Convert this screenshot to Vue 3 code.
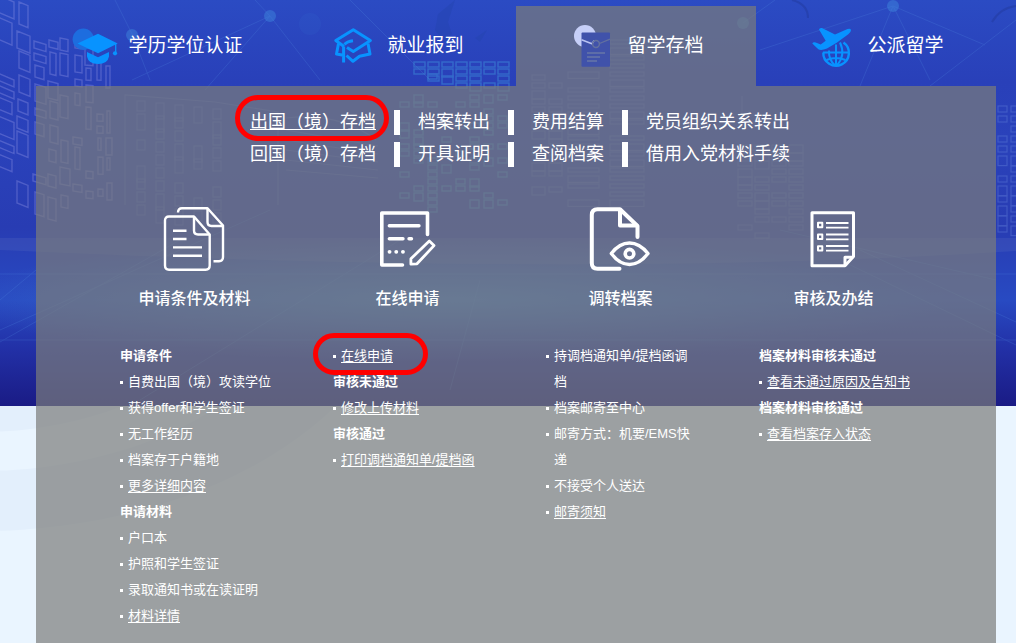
<script setup>
const tabs = [
  { label: '学历学位认证', icon: 'cap' },
  { label: '就业报到', icon: 'grad' },
  { label: '留学存档', icon: 'card', active: true },
  { label: '公派留学', icon: 'plane' },
]

const quickLinks = [
  [{ text: '出国（境）存档', current: true }, { text: '档案转出' }, { text: '费用结算' }, { text: '党员组织关系转出' }],
  [{ text: '回国（境）存档' }, { text: '开具证明' }, { text: '查阅档案' }, { text: '借用入党材料手续' }],
]

const columns = [
  {
    title: '申请条件及材料',
    icon: 'docs',
    groups: [
      {
        heading: '申请条件',
        items: [
          { text: '自费出国（境）攻读学位' },
          { text: '获得offer和学生签证' },
          { text: '无工作经历' },
          { text: '档案存于户籍地' },
          { text: '更多详细内容', link: true },
        ],
      },
      {
        heading: '申请材料',
        items: [
          { text: '户口本' },
          { text: '护照和学生签证' },
          { text: '录取通知书或在读证明' },
          { text: '材料详情', link: true },
        ],
      },
    ],
  },
  {
    title: '在线申请',
    icon: 'edit',
    groups: [
      { items: [{ text: '在线申请', link: true, marked: true }] },
      { heading: '审核未通过', items: [{ text: '修改上传材料', link: true }] },
      { heading: '审核通过', items: [{ text: '打印调档通知单/提档函', link: true }] },
    ],
  },
  {
    title: '调转档案',
    icon: 'eye',
    groups: [
      {
        items: [
          { text: '持调档通知单/提档函调档' },
          { text: '档案邮寄至中心' },
          { text: '邮寄方式：机要/EMS快递' },
          { text: '不接受个人送达' },
          { text: '邮寄须知', link: true },
        ],
      },
    ],
  },
  {
    title: '审核及办结',
    icon: 'list',
    groups: [
      { heading: '档案材料审核未通过', items: [{ text: '查看未通过原因及告知书', link: true }] },
      { heading: '档案材料审核通过', items: [{ text: '查看档案存入状态', link: true }] },
    ],
  },
]

/* Deterministic scatter of window outlines for the skyline artwork */
function windows(x, y, cols, rows, w, h, dx, dy, keep, seed, slope = 0) {
  const out = []
  let s = seed
  for (let c = 0; c < cols; c++) {
    for (let r = 0; r < rows; r++) {
      s = (s * 1103515245 + 12345) % 2147483648
      const v = s / 2147483648
      if (v > keep) continue
      out.push({ x: x + c * dx, y: y + r * dy + c * slope, w, h: h * (v < keep / 3 ? 1.6 : 1) })
    }
  }
  return out
}

/* Facade seen in perspective: panes shrink and sink towards the right edge */
const facadeColumns = [
  [-6, 20, -6, 0.42],
  [17, 13, 2, 0.4],
  [33, 13, 12, 0.3],
  [48, 10, 26, 0.25],
  [60, 10, 38, 0.2],
  [73, 9, 36, 0.15],
  [85, 8, 48, 0.1],
  [96, 7, 58, 0.05],
  [106, 6, 66, 0],
]
const facade = facadeColumns
  .map(([x, w, top, tilt], c) => {
    let d = ''
    let y = top
    let k = c * 3 + 1
    while (y < 212 - c * 3) {
      k = (k * 17 + 5) % 31
      const h = 7 + (k % 4) * 5
      const inset = k % 3
      if (k % 5 !== 0) {
        const l = x + inset
        const r = x + w - (k % 2) * 2
        d += `M${l} ${y} L${r} ${y + (r - l) * tilt} V${y + h + (r - l) * tilt} L${l} ${y + h}Z `
      }
      y += h + 3 + (k % 3) * 2 + (y > 140 ? 8 : 0)
    }
    return d
  })
  .join('')

const towers = [
  ...windows(137, 101, 5, 9, 8, 10, 19, 13, 0.8, 5, 2),
  ...windows(532, 75, 2, 15, 13, 5, 17, 8, 0.7, 9),
  ...windows(568, 72, 1, 17, 31, 4, 0, 8, 0.85, 14),
  ...windows(610, 40, 1, 21, 34, 4, 0, 8, 0.85, 3),
  ...windows(738, 145, 4, 12, 14, 5, 17, 8, 0.7, 8),
]
const centerWindows = [
  ...windows(414, 62, 3, 3, 11, 5, 14, 7, 0.85, 42),
  ...windows(456, 62, 4, 4, 11, 5, 14, 7, 0.9, 77),
  ...windows(400, 74, 8, 20, 9, 5, 14, 7, 0.35, 13),
]
const rightWindows = windows(998, 106, 2, 13, 9, 6, 13, 10, 0.85, 19)
</script>

<template>
  <div class="page">
    <svg class="waves" viewBox="0 0 1016 237" preserveAspectRatio="none" aria-hidden="true">
      <rect width="1016" height="237" fill="#eaf5ff" />
      <ellipse cx="-20" cy="-160" rx="430" ry="285" fill="#e3effc" />
      <ellipse cx="-20" cy="-160" rx="340" ry="225" fill="#eaf5ff" />
      <ellipse cx="-20" cy="-160" rx="280" ry="186" fill="#e3effc" />
    </svg>
    <svg class="hero" viewBox="0 0 1016 406" preserveAspectRatio="none" aria-hidden="true">
      <defs>
        <linearGradient id="sky" x1="0" y1="0" x2="0" y2="1">
          <stop offset="0" stop-color="#2b4bc3" />
          <stop offset="0.2" stop-color="#2940b9" />
          <stop offset="0.35" stop-color="#2a42bb" />
          <stop offset="0.56" stop-color="#283cb3" />
          <stop offset="0.74" stop-color="#284ac2" />
          <stop offset="0.86" stop-color="#2230a6" />
          <stop offset="1" stop-color="#1a1b85" />
        </linearGradient>
        <radialGradient id="glow">
          <stop offset="0" stop-color="#57a8d8" stop-opacity="0.45" />
          <stop offset="1" stop-color="#57a8d8" stop-opacity="0" />
        </radialGradient>
      </defs>
      <rect width="1016" height="406" fill="url(#sky)" />
      <ellipse cx="450" cy="300" rx="500" ry="62" fill="url(#glow)" />
      <path d="M0 238 H1016 V251 Q600 278 0 250Z" fill="#7890c8" opacity="0.15" />
      <g stroke="#5793e6" stroke-width="1" opacity="0.2" fill="none">
        <path d="M270 16 L132 80 M270 16 L205 90 M270 16 L320 80 M270 16 L255 0 M132 34 L115 0 M132 34 L150 80 M350 0 L430 80" />
        <path d="M893 6 L760 50 M893 6 L930 80 M893 6 L985 45 M893 6 L860 86 M743 23 L775 0 M1016 20 L930 86" />
        <path d="M0 300 L36 270 M0 342 L180 240 M0 330 L270 210 M140 400 L400 240 M450 390 L480 280 M996 280 L780 230 M1016 345 L840 260 M1016 322 L860 250" />
        <path d="M0 274 H1016 M0 340 H1016" />
      </g>
      <g fill="#3d83dc" opacity="0.5">
        <circle cx="270" cy="16" r="6" /><circle cx="132" cy="35" r="6" />
        <circle cx="893" cy="6" r="6" /><circle cx="743" cy="23" r="6" />
        <circle cx="310" cy="24" r="11" opacity="0.2" />
      </g>
      <path d="M455 0 L448 22 L452 34 L444 42 L435 30 L438 14Z M475 38 L487 30 L480 42Z" fill="#2444ad" opacity="0.4" />
      <path d="M792 0 Q808 4 808 18 M992 22 Q1000 8 1016 6" stroke="#223a9d" stroke-width="2" fill="none" opacity="0.5" />
      <path :d="facade" fill="none" stroke="#a6a6ee" stroke-width="1.4" opacity="0.3" />
      <g fill="none" stroke="#7f9ae0" stroke-width="1.2" opacity="0.22">
        <rect v-for="(r, i) in towers" :key="i" :x="r.x" :y="r.y" :width="r.w" :height="r.h" />
        <path d="M125 205 V95 L215 102 L278 112 V205 M742 96 V130 M730 150 H755 M286 118 Q340 112 376 140" />
        <path d="M286 130 L378 146 M286 140 L378 154 M286 150 L378 162 M286 160 L378 170 M286 170 L378 178" />
      </g>
      <g fill="none" stroke="#3f93dc" stroke-width="1.4" opacity="0.5">
        <rect v-for="(r, i) in centerWindows" :key="i" :x="r.x" :y="r.y" :width="r.w" :height="r.h" />
      </g>
      <g fill="none" stroke="#6c8ae0" stroke-width="1.2" opacity="0.35">
        <rect v-for="(r, i) in rightWindows" :key="i" :x="r.x" :y="r.y" :width="r.w" :height="r.h" />
      </g>
    </svg>

    <div class="shell">
      <nav class="tabs" aria-label="业务">
        <a v-for="t in tabs" :key="t.label" href="#" class="tab" :class="{ active: t.active }">
          <svg v-if="t.icon === 'cap'" class="tab-icon" viewBox="0 0 48 48" aria-hidden="true">
            <circle cx="14.3" cy="17.3" r="10.7" fill="#1d6ddf" />
            <path d="M8.5 21.5 L29 11.7 L48.7 21.5 L29 31.2Z" fill="#0893ff" />
            <path d="M18 30 L29 35.2 L40 30 V34.5 Q38.6 42 29 42 Q19.4 42 18 34.5Z" fill="#0893ff" />
            <path d="M46.7 21 V30" stroke="#0893ff" stroke-width="1.3" />
            <circle cx="46" cy="31.3" r="2.1" fill="#0893ff" />
          </svg>
          <svg v-else-if="t.icon === 'grad'" class="tab-icon" viewBox="0 0 48 48" fill="none" stroke="#0893ff" stroke-width="3" stroke-linejoin="round" aria-hidden="true">
            <path d="M16 24.5 L7.8 18.5 L25.3 7.8 L42.4 18.5 L25.3 29.4 L19 25.4" />
            <path d="M16.5 22.5 Q19 19.5 25 18.8" />
            <path d="M10.5 21.5 L8.5 32 L15.5 33.3 M15.6 24.5 V40.5 M18.5 33.5 L25 39.3 L31.5 34.2 L42 32 L40 21.5" />
          </svg>
          <svg v-else-if="t.icon === 'card'" class="tab-icon" viewBox="0 0 48 48" fill="none" aria-hidden="true">
            <circle cx="17" cy="14" r="11" fill="#c6cff8" />
            <rect x="13.5" y="10.5" width="28.5" height="34.3" rx="1" fill="#4052aa" />
            <path d="M13.5 17.7 L20 20.2 L24 21.8 L26 18.6" stroke="#b9c3f2" stroke-width="1.5" />
            <path d="M31.5 21.5 L42 17.2" stroke="#63719f" stroke-width="1.3" />
            <circle cx="28" cy="22" r="3.4" stroke="#63719f" stroke-width="1.5" />
            <path d="M19 31 H37 M19 35 H32 M19 39 H29" stroke="#5d6da8" stroke-width="1.8" />
          </svg>
          <svg v-else class="tab-icon" viewBox="0 0 48 48" fill="none" stroke="#0893ff" stroke-width="2" aria-hidden="true">
            <path d="M11 7.5 Q11.5 5.5 14 6 L27 12.5 L39.5 7 Q42.6 6.2 43 8 Q43 10.5 40.3 12.3 L28.7 20.7 L19 26.6 Q13 29 10.3 27.3 L4.3 21.5 Q5 19.8 7.7 20.5 L12.7 22.6 L17.7 18.7Z" fill="#0893ff" stroke="none" />
            <path d="M35.5 20.5 A12.8 12.8 0 1 1 15.3 30.5" stroke-width="2.4" />
            <path d="M15 30.5 H41 M28 22.5 V43.5 M18.5 38 Q28 34 37.5 38" />
            <path d="M21 28.5 Q20.5 38 27 43.3 M32 20.5 Q38 33 29 43.3" />
          </svg>
          <span>{{ t.label }}</span>
        </a>
      </nav>

      <main class="panel">
        <div class="quick">
          <ul v-for="(row, i) in quickLinks" :key="i" class="quick-row">
            <li v-for="l in row" :key="l.text">
              <a href="#" :class="{ current: l.current }">{{ l.text }}</a>
              <span v-if="l.current" class="mark mark-quick"></span>
            </li>
          </ul>
        </div>

        <div class="columns">
          <section v-for="c in columns" :key="c.title" class="column">
            <svg v-if="c.icon === 'docs'" class="step-icon" viewBox="0 0 64 64" stroke-width="2.4" aria-hidden="true">
              <path d="M6 9.5 H31 L46.7 27.5 V58.5 Q46.7 62.7 42.7 62.7 H6 Q2 62.7 2 58.5 V13.5 Q2 9.5 6 9.5Z" />
              <path d="M31 9.5 V23.5 Q31 27.5 35 27.5 H46.7" />
              <path d="M15 5.5 Q15 1.3 19 1.3 H44.5 L60 18.5 V50 Q60 54.2 56 54.2 H50.5" />
              <path d="M44.5 1.3 V15 Q44.5 19 48.5 19 H60" />
              <path d="M10 23.7 H23.5 M10 32 H23.5 M10 40.4 H39 M10 48.7 H39" />
            </svg>
            <svg v-else-if="c.icon === 'edit'" class="step-icon" viewBox="0 0 64 64" stroke-width="3.6" stroke-linecap="round" aria-hidden="true">
              <path d="M51.5 27.5 V6 H5.8 V58 H26.5" />
              <path d="M13.3 18.8 H43 M13.3 31.8 H27 M33 31.8 H35.5" stroke-width="3.4" />
              <path d="M13.5 44.8 H13.6 M20.2 44.8 H20.3 M26.9 44.8 H27" stroke-width="3.8" />
              <path d="M34.9 57.2 V51.8 L53.3 34 L58 38.6 L41 56.8Z" stroke-width="2.8" />
            </svg>
            <svg v-else-if="c.icon === 'eye'" class="step-icon" viewBox="0 0 64 64" stroke-width="4" stroke-linecap="round" aria-hidden="true">
              <path d="M30.5 61.8 H8.5 Q2.8 61.8 2.8 56 V8 Q2.8 2.2 8.5 2.2 H31 L48.5 19 V30" />
              <path d="M31 3 V18.6 H47.5" />
              <path d="M22.3 46.5 Q30.5 36 40.5 36 Q50.5 36 59 46.5 Q50.5 57.5 40.5 57.5 Q30.5 57.5 22.3 46.5Z" stroke-width="3.4" />
              <circle cx="40.5" cy="46.7" r="4.3" stroke-width="3.6" />
            </svg>
            <svg v-else class="step-icon" viewBox="0 0 64 64" stroke-width="3" aria-hidden="true">
              <path d="M10 5.8 H51.5 V49.5 L43 58.7 H10Z" />
              <path d="M43 58 V50.2 H51" />
              <path d="M16 15.8 H20.3 V20.2 H16Z M16 27.5 H20.3 V31.9 H16Z M16 39.2 H20.3 V43.6 H16Z" stroke-width="2" />
              <path d="M24 16 H46.5 M24 20.7 H46.5 M24 27.5 H46.5 M24 32.3 H46.5 M24 39 H46.5 M24 43.7 H46.5" stroke-width="1.8" />
            </svg>
            <h2>{{ c.title }}</h2>
            <div class="details">
              <template v-for="(g, gi) in c.groups" :key="gi">
                <h3 v-if="g.heading">{{ g.heading }}</h3>
                <ul>
                  <li v-for="item in g.items" :key="item.text">
                    <a v-if="item.link" href="#">{{ item.text }}</a>
                    <span v-else>{{ item.text }}</span>
                    <span v-if="item.marked" class="mark mark-detail"></span>
                  </li>
                </ul>
              </template>
            </div>
          </section>
        </div>
      </main>
    </div>
  </div>
</template>

<style>
body {
  margin: 0;
  background: #eaf5ff;
}
</style>

<style scoped>
.page {
  position: relative;
  display: flex;
  flex-direction: column;
  box-sizing: border-box;
  min-height: 100vh;
  padding: 6px 20px 0 36px;
  overflow: hidden;
  color: #fff;
  font-family: "Liberation Sans", "Noto Sans CJK SC", sans-serif;
}
.hero,
.waves {
  position: absolute;
  left: 0;
  width: 100%;
}
.hero {
  top: 0;
  height: 406px;
}
.waves {
  top: 406px;
  height: 237px;
}
.shell {
  position: relative;
  flex: 1;
  display: flex;
  flex-direction: column;
}
ul {
  margin: 0;
  padding: 0;
  list-style: none;
}
a {
  color: inherit;
}
.tabs {
  display: grid;
  grid-template-columns: repeat(4, 1fr);
}
.tab {
  display: flex;
  align-items: center;
  justify-content: center;
  gap: 11px;
  height: 80px;
  font-size: 19px;
  line-height: 28px;
  text-decoration: none;
}
.tab.active,
.panel {
  background: rgba(123, 124, 122, 0.7);
}
.tab-icon {
  width: 48px;
  height: 48px;
  overflow: visible;
}
.panel {
  flex: 1;
  padding: 24px 56px 10px 52px;
}
.quick {
  display: flex;
  flex-direction: column;
  gap: 7px;
  padding-left: 12px;
}
.quick-row {
  display: flex;
  justify-content: center;
}
.quick-row li {
  position: relative;
  padding: 0 18px;
  font-size: 18px;
  line-height: 25px;
  white-space: nowrap;
}
.quick-row li + li {
  border-left: 6px solid #fff;
}
.quick-row a {
  text-decoration: none;
}
.quick-row a.current {
  text-decoration: underline;
}
.mark {
  position: absolute;
  box-sizing: border-box;
  border: 5px solid #f00;
  border-radius: 23px;
  pointer-events: none;
}
.mark-quick {
  inset: -15px 5px -6px 3px;
}
.mark-detail {
  top: -10px;
  left: -20px;
  width: 115px;
  height: 42px;
}
.columns {
  display: grid;
  grid-template-columns: repeat(4, 1fr);
  margin-top: 40px;
}
.column {
  display: flex;
  flex-direction: column;
  align-items: center;
}
.step-icon {
  width: 64px;
  height: 64px;
  fill: none;
  stroke: #fff;
  stroke-linejoin: round;
}
h2 {
  margin: 16px 0 32px;
  font-size: 16px;
  font-weight: 500;
  line-height: 24px;
}
.details {
  align-self: stretch;
  padding: 0 29px 0 32px;
  font-size: 13px;
  line-height: 26px;
}
.details a {
  text-underline-offset: 2px;
}
h3 {
  margin: 0;
  font-size: 13px;
  line-height: 26px;
}
.details li {
  position: relative;
  display: grid;
  grid-template-columns: 8px 1fr;
}
.details li::before {
  content: "";
  width: 3px;
  height: 3px;
  margin-top: 12px;
  background: #fff;
}
</style>
